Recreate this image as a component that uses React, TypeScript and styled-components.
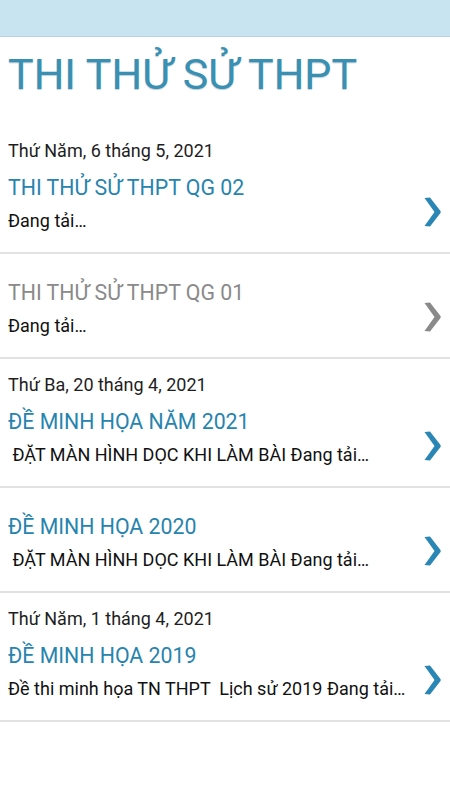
import React from "react";
import styled, { createGlobalStyle } from "styled-components";

const GlobalStyle = createGlobalStyle`
    html, body {
        margin: 0;
        padding: 0;
        background: #ffffff;
        font-family: Roboto, "Noto Sans", Arial, sans-serif;
    }
`;

const PageSC = styled.div`
    width: 450px;
    min-height: 800px;
    background: #ffffff;
`;

const TopBarSC = styled.div`
    height: 36px;
    background-color: #c7e4f0;
    border-bottom: 1px solid #b6d3e0;
`;

const TitleSC = styled.h1`
    margin: 11px 0 25px;
    padding: 0 8px;
    font-size: 43px;
    line-height: 52px;
    font-weight: 400;
    color: #3990b2;
    text-shadow: 0 1px 1px rgba(0, 60, 90, 0.25);
`;

const ListSC = styled.div`
    display: flex;
    flex-direction: column;
`;

const ItemSC = styled.div`
    display: flex;
    align-items: flex-end;
    padding: 15px 9px 20px 8px;
    border-bottom: 2px solid #e2e2e2;
`;

const BodySC = styled.div`
    flex: 1;
    min-width: 0;
    display: flex;
    flex-direction: column;
`;

const DateSC = styled.div`
    font-size: 18px;
    line-height: 22px;
    color: #1e1e1e;
`;

const ItemTitleSC = styled.div<{ $visited?: boolean; $afterDate?: boolean }>`
    margin-top: ${(p) => (p.$afterDate ? "12px" : "10px")};
    font-size: 21.3px;
    line-height: 28px;
    color: ${(p) => (p.$visited ? "#8a8a8a" : "#2784ae")};
`;

const SnippetSC = styled.div`
    margin-top: 8px;
    font-size: 18px;
    line-height: 22px;
    color: #111111;
    white-space: pre;
    overflow: hidden;
`;

const ChevronSC = styled.svg`
    flex: none;
    width: 17px;
    height: 30px;
    margin-bottom: 5px;
`;

type Post = {
    date?: string;
    title: string;
    snippet: string;
    visited?: boolean;
};

const posts: Post[] = [
    { date: "Thứ Năm, 6 tháng 5, 2021", title: "THI THỬ SỬ THPT QG 02", snippet: "Đang tải…" },
    { title: "THI THỬ SỬ THPT QG 01", snippet: "Đang tải…", visited: true },
    {
        date: "Thứ Ba, 20 tháng 4, 2021",
        title: "ĐỀ MINH HỌA NĂM 2021",
        snippet: " ĐẶT MÀN HÌNH DỌC KHI LÀM BÀI Đang tải…",
    },
    { title: "ĐỀ MINH HỌA 2020", snippet: " ĐẶT MÀN HÌNH DỌC KHI LÀM BÀI Đang tải…" },
    {
        date: "Thứ Năm, 1 tháng 4, 2021",
        title: "ĐỀ MINH HỌA 2019",
        snippet: "Đề thi minh họa TN THPT  Lịch sử 2019 Đang tải…",
    },
];

const Chevron = ({ color }: { color: string }) => (
    <ChevronSC viewBox="0 0 17 30">
        <path d="M0.5 1 L6 0.5 L16.5 14 Q17 15 16.5 16 L6 29.5 L0.5 29 L10.5 15 Z" fill={color} />
    </ChevronSC>
);

export default function App() {
    return (
        <PageSC>
            <GlobalStyle />
            <TopBarSC />
            <TitleSC>THI THỬ SỬ THPT</TitleSC>
            <ListSC>
                {posts.map((p, i) => (
                    <ItemSC key={i}>
                        <BodySC>
                            {p.date && <DateSC>{p.date}</DateSC>}
                            <ItemTitleSC $visited={p.visited} $afterDate={!!p.date}>
                                {p.title}
                            </ItemTitleSC>
                            <SnippetSC>{p.snippet}</SnippetSC>
                        </BodySC>
                        <Chevron color={p.visited ? "#8a8a8a" : "#2a86b4"} />
                    </ItemSC>
                ))}
            </ListSC>
        </PageSC>
    );
}
